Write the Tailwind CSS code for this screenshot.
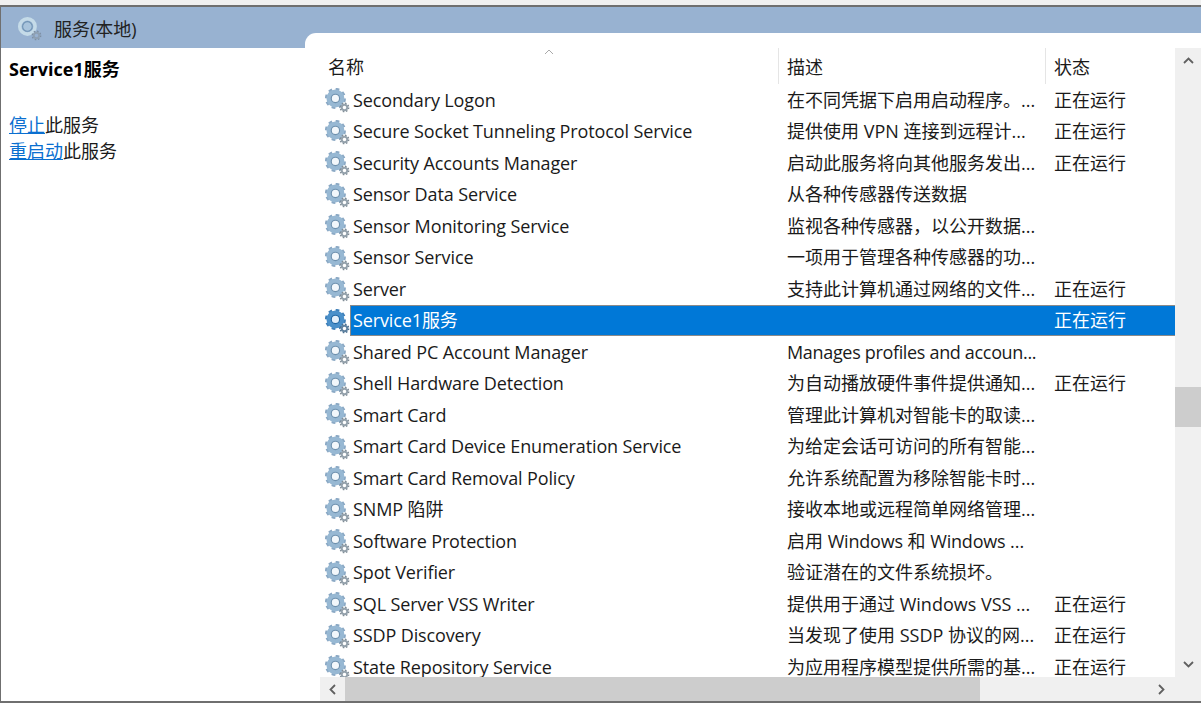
<!DOCTYPE html>
<html lang="zh-CN">
<head>
    <meta charset="UTF-8">
    <title>服务(本地)</title>
    <script src="https://cdn.jsdelivr.net/npm/@tailwindcss/browser@4"></script>
</head>
<body class="w-[1201px] h-[703px] overflow-hidden bg-[#f0f0f0] font-['Open_Sans','Noto_Sans_CJK_SC',sans-serif] text-[#1a1a1a]">
    <!-- 齿轮图标 -->
    <svg class="hidden">
        <symbol id="gear" viewBox="0 0 24 24">
            <circle cx="10" cy="10" r="8.6" fill="none" stroke="#8aa8c4" stroke-width="3" stroke-dasharray="3.4 3.35"/>
            <circle cx="10" cy="10" r="6.3" fill="none" stroke="#97b8d3" stroke-width="4.6"/>
            <circle cx="10" cy="10" r="4" fill="#f2f7fb" stroke="#6d90ae" stroke-width="1.1"/>
            <circle cx="18.7" cy="18.7" r="3.9" fill="none" stroke="#7f8b95" stroke-width="1.6" stroke-dasharray="1.5 1.56"/>
            <circle cx="18.7" cy="18.7" r="2.6" fill="none" stroke="#95a2ac" stroke-width="1.8"/>
        </symbol>
        <symbol id="gear-selected" viewBox="0 0 24 24">
            <circle cx="10" cy="10" r="8.6" fill="none" stroke="#3f7fb8" stroke-width="3" stroke-dasharray="3.4 3.35"/>
            <circle cx="10" cy="10" r="6.3" fill="none" stroke="#4a90ca" stroke-width="4.6"/>
            <circle cx="10" cy="10" r="4" fill="#e3effa" stroke="#1f66a3" stroke-width="1.1"/>
            <circle cx="18.7" cy="18.7" r="3.9" fill="none" stroke="#4b6f8f" stroke-width="1.6" stroke-dasharray="1.5 1.56"/>
            <circle cx="18.7" cy="18.7" r="2.6" fill="none" stroke="#5f82a0" stroke-width="1.8"/>
        </symbol>
        <symbol id="gear-title" viewBox="0 0 24 24">
            <circle cx="10" cy="10" r="7.4" fill="none" stroke="#c5dbe8" stroke-width="3.4"/>
            <circle cx="10" cy="10" r="4.6" fill="#a9c4dc" stroke="#6f93b3" stroke-width="1"/>
            <circle cx="18.7" cy="18.7" r="3.9" fill="none" stroke="#7d8fa3" stroke-width="1.6" stroke-dasharray="1.5 1.56"/>
            <circle cx="18.7" cy="18.7" r="2.6" fill="none" stroke="#8ea0b3" stroke-width="1.8"/>
        </symbol>
    </svg>

    <div class="h-[5px]"></div>
    <div class="h-[698px] flex border-t-2 border-b-2 border-l border-[#6f6f6f] bg-white">
        <!-- 左侧 -->
        <div class="w-[304px] shrink-0">
            <div class="h-[41px] bg-[#98b2d1] flex items-center pl-[16px] gap-[12px] text-[18px]">
                <svg class="w-[25px] h-[25px] mt-[1px]"><use href="#gear-title"/></svg>
                <span class="text-[#222] mt-[3px]">服务(本地)</span>
            </div>
            <div class="pl-[8px] pt-[8px]">
                <div class="font-bold text-[18px] leading-[26px] text-black">Service1服务</div>
                <div class="mt-[31px] text-[18px] leading-[25.5px]">
                    <div><a class="text-[#0a6fd0] underline">停止</a>此服务</div>
                    <div><a class="text-[#0a6fd0] underline">重启动</a>此服务</div>
                </div>
            </div>
        </div>

        <!-- 右侧 -->
        <div class="flex-1 min-w-0 bg-[#98b2d1]">
            <div class="h-[26px]"></div>
            <div class="h-[668px] bg-white rounded-tl-[11px] flex flex-col">
                <div class="h-[15px] shrink-0"></div>
                <div class="h-[629px] flex">
                    <div class="flex-1 min-w-0 overflow-hidden">
                        <!-- 表头 -->
                        <div class="relative h-[36px] flex text-[18px] items-center">
                            <div class="w-[473px] pl-[23px] pt-[2px]">名称</div>
                            <div class="w-[267px] pl-[8px] pt-[2px] h-full flex items-center border-l border-[#e5e5e5]">描述</div>
                            <div class="pl-[8px] pt-[2px] h-full flex items-center border-l border-[#e5e5e5]">状态</div>
                            <svg class="absolute left-[239px] top-[1px] w-[10px] h-[6px]" viewBox="0 0 10 6"><path d="M1 5 L5 1 L9 5" fill="none" stroke="#a9a9a9"/></svg>
                        </div>
                        <div id="rows"></div>
                    </div>
                    <!-- 竖向滚动条 -->
                    <div class="w-[26px] shrink-0 bg-[#f0f0f0] flex flex-col items-center">
                        <svg class="mt-[9px] w-[11px] h-[7px]" viewBox="0 0 11 7"><path d="M1 6 L5.5 1.5 L10 6" fill="none" stroke="#606060" stroke-width="1.8"/></svg>
                        <div class="w-full h-[40px] bg-[#cdcdcd] mt-[323px]"></div>
                        <svg class="mt-auto mb-[9px] w-[11px] h-[7px]" viewBox="0 0 11 7"><path d="M1 1 L5.5 5.5 L10 1" fill="none" stroke="#606060" stroke-width="1.8"/></svg>
                    </div>
                </div>
                <!-- 横向滚动条 -->
                <div class="h-[24px] shrink-0 pl-[15px] flex bg-white">
                    <div class="flex-1 flex items-center bg-[#f0f0f0]">
                        <div class="w-[25px] flex justify-center"><svg class="w-[7px] h-[11px]" viewBox="0 0 7 11"><path d="M6 1 L1.5 5.5 L6 10" fill="none" stroke="#606060" stroke-width="1.8"/></svg></div>
                        <div class="w-[635px] h-full bg-[#cdcdcd]"></div>
                        <div class="flex-1 flex justify-end pr-[36px]"><svg class="w-[7px] h-[11px]" viewBox="0 0 7 11"><path d="M1 1 L5.5 5.5 L1 10" fill="none" stroke="#606060" stroke-width="1.8"/></svg></div>
                    </div>
                </div>
            </div>
        </div>
    </div>

    <script>
        // 服务列表
        const services = [
            ['Secondary Logon', '在不同凭据下启用启动程序。...', '正在运行'],
            ['Secure Socket Tunneling Protocol Service', '提供使用 VPN 连接到远程计...', '正在运行'],
            ['Security Accounts Manager', '启动此服务将向其他服务发出...', '正在运行'],
            ['Sensor Data Service', '从各种传感器传送数据', ''],
            ['Sensor Monitoring Service', '监视各种传感器，以公开数据...', ''],
            ['Sensor Service', '一项用于管理各种传感器的功...', ''],
            ['Server', '支持此计算机通过网络的文件...', '正在运行'],
            ['Service1服务', '', '正在运行', true],
            ['Shared PC Account Manager', '<span class="tracking-[-0.33px]">Manages profiles and accoun...</span>', ''],
            ['Shell Hardware Detection', '为自动播放硬件事件提供通知...', '正在运行'],
            ['Smart Card', '管理此计算机对智能卡的取读...', ''],
            ['Smart Card Device Enumeration Service', '为给定会话可访问的所有智能...', ''],
            ['Smart Card Removal Policy', '允许系统配置为移除智能卡时...', ''],
            ['SNMP 陷阱', '接收本地或远程简单网络管理...', ''],
            ['Software Protection', '启用 <span class="tracking-[-0.2px]">Windows</span> 和 <span class="tracking-[-0.2px]">Windows</span> ...', ''],
            ['Spot Verifier', '验证潜在的文件系统损坏。', ''],
            ['SQL Server VSS Writer', '提供用于通过 Windows VSS ...', '正在运行'],
            ['SSDP Discovery', '当发现了使用 SSDP 协议的网...', '正在运行'],
            ['State Repository Service', '为应用程序模型提供所需的基...', '正在运行']
        ];

        document.getElementById('rows').innerHTML = services.map(([name, desc, status, selected]) => `
            <div class="h-[31.5px] flex items-center text-[18px] whitespace-nowrap">
                <svg class="ml-[20px] mt-[2px] w-[25px] h-[25px] shrink-0"><use href="${selected ? '#gear-selected' : '#gear'}"/></svg>
                <div class="${selected ? 'h-full flex-1 flex items-center pt-[1px] bg-[#0078d7] text-white border border-[#8a8a8a] border-r-0' : 'h-full flex-1 flex items-center pt-[1px] border border-transparent border-r-0'}">
                    <div class="w-[436px] pl-[2px] tracking-[-0.12px]">${name}</div>
                    <div class="w-[267px]">${desc}</div>
                    <div>${status}</div>
                </div>
            </div>`).join('');
    </script>
</body>
</html>
